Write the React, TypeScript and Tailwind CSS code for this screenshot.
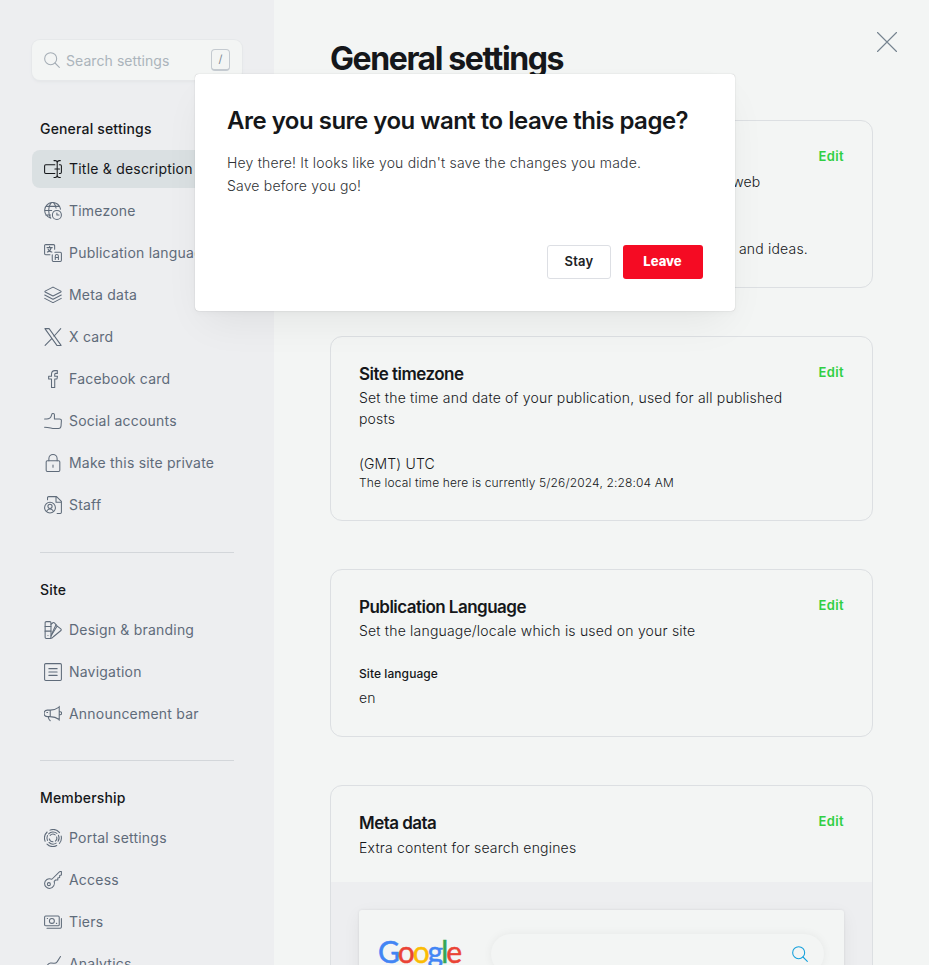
import React from 'react';

type IconName =
  | 'title' | 'globe' | 'language' | 'layers' | 'x' | 'facebook' | 'thumb' | 'lock' | 'staff'
  | 'palette' | 'nav' | 'mega' | 'portal' | 'key' | 'tiers' | 'analytics';

const shapes: Record<IconName, React.ReactNode> = {
  title: (
    <>
      <path d="M14.5 6.3H2.3A1.6 1.6 0 0 0 .8 7.9v8.4a1.6 1.6 0 0 0 1.5 1.6h12.2M20.5 6.3h1.2a1.6 1.6 0 0 1 1.5 1.6v8.4a1.6 1.6 0 0 1-1.5 1.6h-1.2" />
      <path d="M13.3.8h1.4a3 3 0 0 1 2.9 3 3 3 0 0 1 3-3h1.2M13.3 23.2h1.4a3 3 0 0 0 2.9-3 3 3 0 0 0 3 3h1.2M17.6 3.8v16.4M14.5 12h6.2" />
    </>
  ),
  globe: (
    <>
      <circle cx="17.2" cy="17.2" r="6" />
      <path d="M20 17.2h-2.8v-2.6" />
      <path d="M9.1 21.5a10.6 10.6 0 1 1 12.9-12M8.9 21.4C7.3 19.3 6.3 15.8 6.3 11.8S7.6 3 10 .8M12.5.8c1.9 1.7 3.2 4.4 3.6 7.6M.8 11.3h9.5M2.6 5.8h18M2.3 17.2h6.4" />
    </>
  ),
  language: (
    <>
      <path d="M8 14.2H2.3A1.5 1.5 0 0 1 .8 12.7V2.3A1.5 1.5 0 0 1 2.3.8h10.4a1.5 1.5 0 0 1 1.5 1.5V7" />
      <path d="M4 4.8h7M7.5 3v1.8M9.5 4.8c-.5 3-2.5 5.2-5 6M5.5 7c.8 1.8 2.8 3.3 5 3.8" />
      <path d="M14.5 11h7.2a1.5 1.5 0 0 1 1.5 1.5v9.2a1.5 1.5 0 0 1-1.5 1.5h-9.2a1.5 1.5 0 0 1-1.5-1.5v-7.2" />
      <path d="M15 20.5v-4.3a2.1 2.1 0 0 1 4.2 0v4.3M15 18h4.2" />
    </>
  ),
  layers: (
    <>
      <path d="M12.7 1.8 22.5 6.8a.7.7 0 0 1 0 1.2l-9.8 5a1.7 1.7 0 0 1-1.4 0L1.5 8a.7.7 0 0 1 0-1.2l9.8-5a1.7 1.7 0 0 1 1.4 0Z" />
      <path d="m23 12-10.2 5.3a1.7 1.7 0 0 1-1.6 0L1 12M23 16.5l-10.2 5.3a1.7 1.7 0 0 1-1.6 0L1 16.5" />
    </>
  ),
  x: <path d="M1.2.8h5.6l16 22.4h-5.6L1.2.8ZM22.3.8l-9 10.2M10.3 14.2 1.5 23.2" />,
  facebook: <path d="M16.9 8.2h-2.6V5.800c0-.9.5-1.300 1.300-1.300h2.200V.8h-3.200c-3.300 0-4.600 2.300-4.600 5v2.400H6.200v3.800H10v11.200h4.300V12h3l.7-3.800h-1.100" />,
  thumb: <path d="M.8 9.200h2.700c3 0 5.500-1.400 6.200-4l.6-2c.5-1.900 3.600-1.500 3.600.6v5.400h6.800c1.400 0 2.600 1.100 2.500 2.500l-.5 7c-.2 1.900-1.500 3.200-3.300 3.200h-5.600c-4 0-6.500-1.700-13-1.700" />,
  lock: (
    <>
      <rect x="2.9" y="9" width="18.2" height="14.2" rx="1.5" />
      <path d="M6.5 9V6.200a5.500 5.500 0 0 1 11 0V9M12 14.600v3" />
    </>
  ),
  staff: (
    <>
      <circle cx="8" cy="15.5" r="7.2" />
      <circle cx="8" cy="13.8" r="2.8" />
      <path d="M3.3 20.5c1-2.100 2.600-3.100 4.700-3.100s3.700 1 4.700 3.100M4.700 5V2.300A1.500 1.500 0 0 1 6.200.8h10.500l6.500 6.500v14.400a1.500 1.500 0 0 1-1.500 1.500h-4.200M16 .8v7.400h7.200" />
    </>
  ),
  palette: (
    <>
      <rect x="1.5" y=".8" width="7.8" height="22.4" rx="1.5" />
      <path d="M1.5 7.2h7.8M1.5 13.5h7.8M5.300 19.200v.2M9.300 4.300l2.600-2a1.500 1.500 0 0 1 2 .2l3.700 4.200L9.300 20M17.200 6.500l5.200 4a1.500 1.500 0 0 1 .2 2.200L12.500 21a5 5 0 0 1-4.200 2.200" />
      <path d="M10 17.8 16 5" />
    </>
  ),
  nav: (
    <>
      <rect x=".8" y=".8" width="22.4" height="22.4" rx="1.5" />
      <path d="M6.5 7.5h11M6.5 12h11M6.5 16.5h11" />
    </>
  ),
  mega: (
    <path d="M4.500 6.800h3.800c4.200 0 8.200-1.300 12-4v16.500c-3.800-2.700-7.800-3.800-12-3.800H4.500a4.300 4.300 0 0 1 0-8.700ZM5.800 15.500c0 2.500.8 4.300 2.500 5.500M8.300 6.800v8.700M20.300 9h1.200a1.700 1.700 0 0 1 0 4h-1.200M3.800 10h1M20.300 1.800v18.500" />
  ),
  portal: (
    <>
      <path d="M8 1.500A11.200 11.200 0 0 1 20.700 4.900M22.900 9.500A11.200 11.200 0 0 1 20.500 19.300M17 22a11.200 11.200 0 0 1-13-1.900M1.500 16.300A11.200 11.200 0 0 1 4.200 4" />
      <path d="M6.200 6.500a8 8 0 0 1 11-.7M19.200 8.400a8 8 0 0 1-.4 8M16.200 18.900a8 8 0 0 1-9.500-.9M4.600 15.200a8 8 0 0 1 0-6.400" />
      <path d="M8.200 8.600a5.100 5.100 0 0 1 6.700-.8M16.900 10.500a5 5 0 0 1-1.700 5.600M12 17.100a5.100 5.100 0 0 1-4.900-3.900" />
    </>
  ),
  key: (
    <>
      <path d="m10.500 11 10-9.800a1.500 1.500 0 0 1 1-.4h1.700v4.500l-2.300.8v2.500l-2.500.7V12h-3l-1.800 1.700c1.200 3.500-.7 9.500-6.200 9.500a6.500 6.500 0 0 1-6.600-6.500c0-4.800 4.800-7.800 9.700-5.700Z" />
      <circle cx="6.500" cy="17.500" r="2" />
    </>
  ),
  tiers: (
    <>
      <rect x=".8" y="4" width="19.500" height="13" rx="1.500" />
      <circle cx="10.500" cy="10.500" r="3.300" />
      <path d="M4.300 7.200h.5M16.500 13.800h.5M23.200 7.500v11.200a1.500 1.500 0 0 1-1.500 1.500H4" />
    </>
  ),
  analytics: <path d="M4 14.500c1.300-2.800 3-4.200 5.300-3.900l3.700.5c2 .2 3.500-.6 4.700-2.300L22 2M1 23h22" />,
};

function Icon({ name }: { name: IconName }) {
  return (
    <svg viewBox="0 0 24 24" className="size-[18px] shrink-0" fill="none" stroke="currentColor" strokeWidth="1.4" strokeLinecap="round" strokeLinejoin="round">
      {shapes[name]}
    </svg>
  );
}

function Magnifier({ className }: { className: string }) {
  return (
    <svg viewBox="0 0 24 24" className={className} fill="none" stroke="currentColor" strokeWidth="1.6" strokeLinecap="round">
      <circle cx="10" cy="10" r="9" />
      <path d="m16.5 16.5 6.5 6.5" />
    </svg>
  );
}

const groups: { title: string; items: [IconName, string][]; gap: string }[] = [
  {
    title: 'General settings',
    gap: 'mt-7',
    items: [
      ['title', 'Title & description'],
      ['globe', 'Timezone'],
      ['language', 'Publication language'],
      ['layers', 'Meta data'],
      ['x', 'X card'],
      ['facebook', 'Facebook card'],
      ['thumb', 'Social accounts'],
      ['lock', 'Make this site private'],
      ['staff', 'Staff'],
    ],
  },
  {
    title: 'Site',
    gap: 'mt-[27px]',
    items: [
      ['palette', 'Design & branding'],
      ['nav', 'Navigation'],
      ['mega', 'Announcement bar'],
    ],
  },
  {
    title: 'Membership',
    gap: 'mt-7',
    items: [
      ['portal', 'Portal settings'],
      ['key', 'Access'],
      ['tiers', 'Tiers'],
      ['analytics', 'Analytics'],
    ],
  },
];

function Sidebar() {
  return (
    <aside className="h-full w-[274px] shrink-0 overflow-hidden bg-[#edeef0] pl-8 pt-10">
      <div className="mb-[37px] flex h-10 w-[210px] items-center rounded-lg bg-[#f3f5f4] pl-3 pr-3 shadow-[0_0_0_1px_#e6e8ea,0_2px_3px_#e3e5e7]">
        <Magnifier className="size-4 text-[#a4adb5]" />
        <span className="ml-1.5 grow text-[14px] tracking-[0.005em] text-[#abb4bb]">Search settings</span>
        <kbd className="flex h-[22px] w-[19px] items-center justify-center rounded border border-b-2 border-[#c4cad0] font-[Inter] text-[11px] text-[#7c8892]">/</kbd>
      </div>
      {groups.map((group, g) => (
        <section key={group.title} className="mb-[25px] w-[210px]">
          <h2 className="ml-2 flex h-[22px] items-center text-[14px] font-medium tracking-[0.012em] text-[#15171a]">{group.title}</h2>
          <ul className="mt-[11px] flex flex-col gap-1">
            {group.items.map(([icon, label], i) => (
              <li
                key={label}
                className={`flex h-[38px] items-center gap-[7px] whitespace-nowrap rounded-lg pl-3 text-[14px] tracking-[0.015em] ${g === 0 && i === 0 ? 'bg-[#dae0e2] text-[#15171a]' : 'text-[#5f6b7a]'}`}
              >
                <Icon name={icon} />
                <span className="pb-0.5">{label}</span>
              </li>
            ))}
          </ul>
          {g < 2 && <div className={`${group.gap} mx-2 h-px bg-[#d3d6da]`} />}
        </section>
      ))}
    </aside>
  );
}

interface CardProps {
  title: string;
  description: string;
  height: string;
  gap?: string;
  children?: React.ReactNode;
}

function Card({ title, description, height, gap = 'mt-px', children }: CardProps) {
  return (
    <section className={`${height} shrink-0 overflow-hidden rounded-xl border border-[#dcdfe2]`}>
      <div className="flex items-start justify-between px-7 pt-[26px]">
        <div className="w-[434px]">
          <h2 className="text-[17px] font-semibold leading-[23px] tracking-[-0.031em] text-[#15171a]">{title}</h2>
          <p className={`${gap} text-[14px] font-light leading-[21px] tracking-[0.014em] text-[#15171a]`}>{description}</p>
        </div>
        <button className="text-[13px] font-semibold leading-[18px] tracking-[0.03em] text-[#30cf43]">Edit</button>
      </div>
      {children}
    </section>
  );
}

function GoogleWordmark() {
  return (
    <div className="-ml-px -mt-px w-[113px] whitespace-nowrap font-[Lato] text-[30px] leading-9 tracking-[-0.068em] [-webkit-text-stroke:0.5px_currentColor]">
      <span className="text-[#4285f4]">G</span>
      <span className="text-[#ea4335]">o</span>
      <span className="text-[#fbbc05]">o</span>
      <span className="text-[#4285f4]">g</span>
      <span className="text-[#34a853]">l</span>
      <span className="text-[#ea4335]">e</span>
    </div>
  );
}

function ConfirmModal() {
  return (
    <div role="dialog" className="absolute left-[195px] top-[74px] flex h-[237px] w-[540px] flex-col rounded bg-white px-8 pb-8 pt-8 shadow-[0_0_1px_rgba(0,0,0,.3),0_2px_6px_rgba(0,0,0,.03),0_18px_40px_-10px_rgba(0,0,0,.07)]">
      <h2 className="text-[24px] font-semibold leading-[30px] tracking-[-0.021em] text-[#15171a]">Are you sure you want to leave this page?</h2>
      <p className="mt-[15px] text-[14px] font-light leading-[23px] tracking-[0.013em] text-[#303336]">
        Hey there! It looks like you didn't save the changes you made.
        <br />
        Save before you go!
      </p>
      <div className="mt-auto flex justify-end gap-3 text-[13px]">
        <button className="h-[34px] w-16 rounded-[3px] border border-[#dddfe4] font-semibold tracking-[0.02em] text-[#202225]">Stay</button>
        <button className="h-[34px] w-20 rounded-[3px] bg-[#f50b23] pr-px font-extrabold text-white">Leave</button>
      </div>
    </div>
  );
}

export default function App() {
  return (
    <div className="relative flex h-[965px] w-[929px] overflow-hidden bg-[#f3f5f4] font-[Inter,sans-serif]">
      <Sidebar />
      <main className="flex min-w-0 grow flex-col pl-14 pr-14 pt-[39px]">
        <h1 className="h-[81px] shrink-0 text-[32px] font-bold leading-10 tracking-[-0.044em] text-[#15171a]">General settings</h1>
        <div className="flex flex-col gap-12">
          <Card title="Title & description" description="The details used to identify your publication around the web" height="h-[168px]">
            <div className="mt-9 flex justify-end pr-16 text-[14px] font-light leading-[42px] tracking-[0.014em] text-[#15171a]">Thoughts, stories and ideas.</div>
          </Card>
          <Card title="Site timezone" description="Set the time and date of your publication, used for all published posts" height="h-[185px]">
            <div className="mt-6 px-7 text-[14px] font-light leading-[21px] tracking-[0.01em] text-[#15171a]">
              (GMT) UTC
              <p className="mt-px text-[12px] leading-4">The local time here is currently 5/26/2024, 2:28:04 AM</p>
            </div>
          </Card>
          <Card title="Publication Language" description="Set the language/locale which is used on your site" height="h-[168px]">
            <div className="mt-[23px] px-7">
              <h3 className="text-[12px] font-medium leading-5 tracking-[0.006em] text-[#15171a]">Site language</h3>
              <p className="mt-[3px] text-[14px] font-light leading-[21px] tracking-[0.014em] text-[#15171a]">en</p>
            </div>
          </Card>
          <Card title="Meta data" description="Extra content for search engines" height="h-[320px]" gap="mt-0.5">
            <div className="mt-6 h-full bg-[#edeef0] px-7 pt-7">
              <div className="flex h-64 items-start rounded-[3px] bg-[#f3f5f4] px-5 pt-6 shadow-[0_0_3px_rgba(0,0,0,.08),0_5px_18px_rgba(0,0,0,.06)]">
                <GoogleWordmark />
                <div className="flex h-10 grow items-center justify-end rounded-full bg-[#f3f5f4] pr-4 shadow-[0_0_10px_rgba(0,0,0,.06)]">
                  <Magnifier className="size-4 text-[#14a0dc]" />
                </div>
              </div>
            </div>
          </Card>
        </div>
      </main>
      <svg viewBox="0 0 20 20" className="absolute left-[877px] top-8 size-5 text-[#75838f]" fill="none" stroke="currentColor" strokeWidth="1.1" strokeLinecap="round">
        <path d="m.5.5 19 19M19.5.5l-19 19" />
      </svg>
      <ConfirmModal />
    </div>
  );
}
